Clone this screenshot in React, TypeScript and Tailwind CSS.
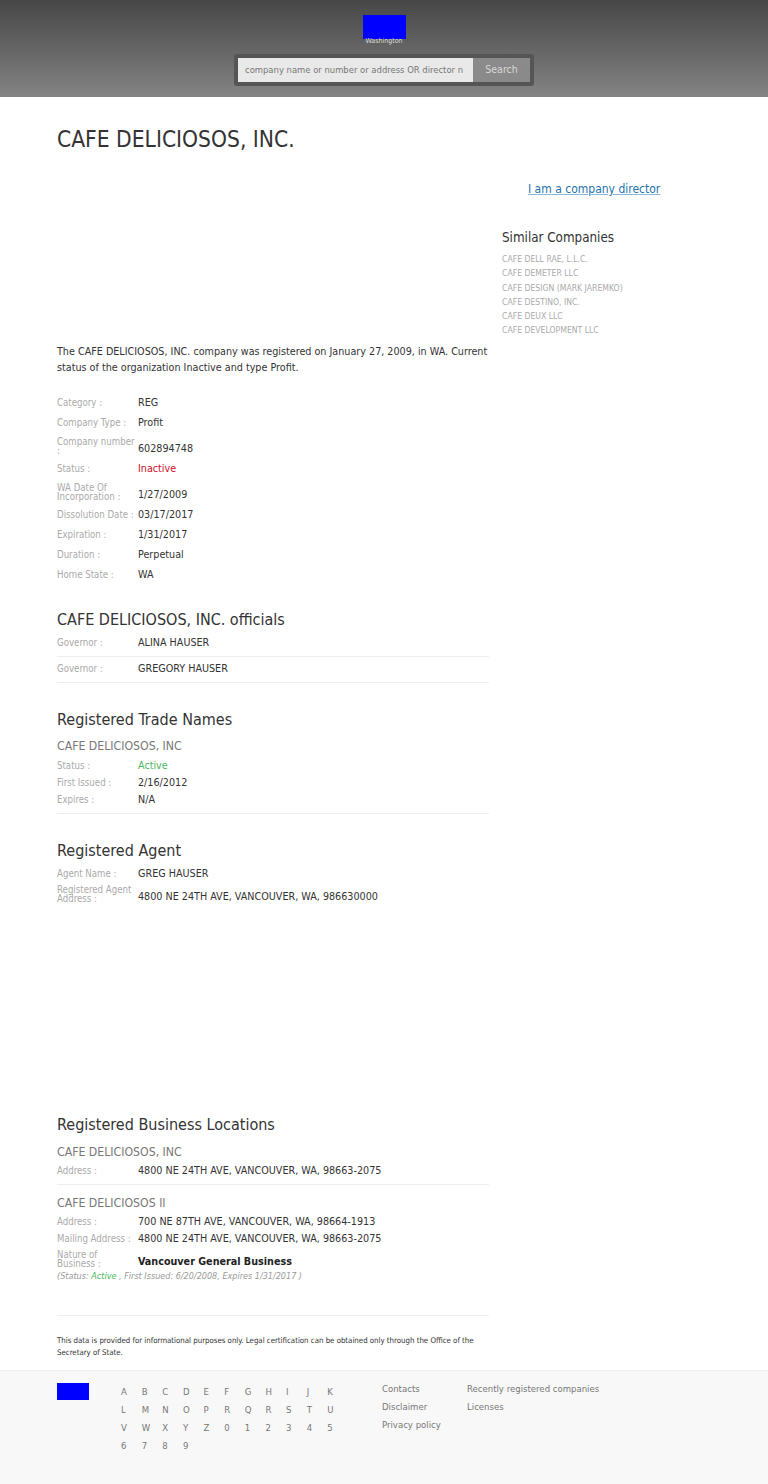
const similar = [
	'CAFE DELL RAE, L.L.C.',
	'CAFE DEMETER LLC',
	'CAFE DESIGN (MARK JAREMKO)',
	'CAFE DESTINO, INC.',
	'CAFE DEUX LLC',
	'CAFE DEVELOPMENT LLC'
]

const details: { label: string; value: string; color?: string }[] = [
	{ label: 'Category :', value: 'REG' },
	{ label: 'Company Type :', value: 'Profit' },
	{ label: 'Company number\n:', value: '602894748' },
	{ label: 'Status :', value: 'Inactive', color: 'text-[#d0102a]' },
	{ label: 'WA Date Of\nIncorporation :', value: '1/27/2009' },
	{ label: 'Dissolution Date :', value: '03/17/2017' },
	{ label: 'Expiration :', value: '1/31/2017' },
	{ label: 'Duration :', value: 'Perpetual' },
	{ label: 'Home State :', value: 'WA' }
]

// the site lists R twice, keep it as shown
const letters = 'ABCDEFGHIJKLMNOPRQRSTUVWXYZ0123456789'.split('')

function Label({ children, leading }: { children: string; leading?: string }) {
	const lh = leading ?? (children.includes('\n') ? 'leading-[9px]' : 'leading-[12px]')
	return (
		<div className={`w-[81px] shrink-0 whitespace-pre text-[9.6px] ${lh} text-[#aaa]`}>
			{children}
		</div>
	)
}

function Row({
	label,
	children,
	className = ''
}: {
	label: string
	children: React.ReactNode
	className?: string
}) {
	return (
		<div className="flex h-[17px] items-center">
			<Label>{label}</Label>
			<div className={`text-[10.7px] leading-[12px] ${className || 'text-[#333]'}`}>
				{children}
			</div>
		</div>
	)
}

function Heading({ children, className = '' }: { children: React.ReactNode; className?: string }) {
	return (
		<h2 className={`text-[16px] leading-[20px] text-[#333] ${className}`}>
			{children}
		</h2>
	)
}

function SubHeading({ children, className = '' }: { children: React.ReactNode; className?: string }) {
	return (
		<h3 className={`text-[12.2px] leading-[16px] text-[#777] ${className}`}>
			{children}
		</h3>
	)
}

export default function App() {
	return (
		<div className="min-h-[1484px] bg-white font-['DejaVu_Sans_Condensed','DejaVu_Sans',sans-serif] text-[#333]">
			<header className="flex h-[97px] flex-col items-center bg-gradient-to-b from-[#474747] to-[#848484] pt-[15px]">
				<div className="relative h-[24px] w-[43px] bg-[#0000ff]">
					<span className="absolute left-1/2 top-[22px] -translate-x-1/2 text-[7px] leading-[8px] text-[#ddd]">
						Washington
					</span>
				</div>
				<div className="mt-[15px] flex h-[32px] w-[300px] rounded-[3px] bg-[#555] p-[4px]">
					<div className="flex flex-1 items-center overflow-hidden whitespace-nowrap bg-[#e9e9e9] pl-[7px] text-[9.4px] text-[#777]">
						company name or number or address OR director n
					</div>
					<div className="flex w-[57px] items-center justify-center bg-[#8a8a8a] text-[10.5px] text-[#d8d8d8]">
						Search
					</div>
				</div>
			</header>

			<main className="mx-auto w-[654px]">
				<h1 className="pt-[29px] text-[22.6px] leading-[26px] text-[#333]">
					CAFE DELICIOSOS, INC.
				</h1>

				<div className="flex gap-[13px]">
					<div className="w-[432px] shrink-0">
						<div className="h-[192px]" />
						<p className="text-[10.7px] leading-[16px] text-[#333]">
							The CAFE DELICIOSOS, INC. company was registered on January 27, 2009, in WA. Current status of the organization Inactive and type Profit.
						</p>

						<div className="mt-[17px]">
							{details.map(d => (
								<div key={d.label} className="flex items-end py-[4px]">
									<Label>{d.label}</Label>
									<div className={`text-[10.7px] leading-[12px] ${d.color ?? 'text-[#333]'}`}>
										{d.value}
									</div>
								</div>
							))}
						</div>

						<Heading className="mt-[25px]">CAFE DELICIOSOS, INC. officials</Heading>
						{['ALINA HAUSER', 'GREGORY HAUSER'].map((name, i) => (
							<div
								key={name}
								className={`flex items-center border-b border-[#eee] ${i === 0 ? 'pt-[7px] pb-[7px]' : 'pt-[6px] pb-[7px]'}`}
							>
								<Label>Governor :</Label>
								<div className="text-[10.7px] leading-[12px]">{name}</div>
							</div>
						))}

						<Heading className="mt-[27px]">Registered Trade Names</Heading>
						<SubHeading className="mt-[8px]">CAFE DELICIOSOS, INC</SubHeading>
						<div className="mt-[3px] border-b border-[#eee] pb-[5px]">
							<Row label="Status :" className="text-[#4cb85c]">Active</Row>
							<Row label="First Issued :">2/16/2012</Row>
							<Row label="Expires :">N/A</Row>
						</div>

						<Heading className="mt-[27px]">Registered Agent</Heading>
						<div className="mt-[5px]">
							<div className="flex items-end py-[2px]">
								<Label>Agent Name :</Label>
								<div className="text-[10.7px] leading-[12px]">GREG HAUSER</div>
							</div>
							<div className="flex items-end pt-[3px] pb-[2px]">
								<Label>{'Registered Agent\nAddress :'}</Label>
								<div className="text-[10.7px] leading-[12px]">4800 NE 24TH AVE, VANCOUVER, WA, 986630000</div>
							</div>
						</div>

						<div className="h-[210px]" />

						<Heading>Registered Business Locations</Heading>
						<SubHeading className="mt-[9px]">CAFE DELICIOSOS, INC</SubHeading>
						<div className="mt-[2px] border-b border-[#eee] pb-[5px]">
							<Row label="Address :">4800 NE 24TH AVE, VANCOUVER, WA, 98663-2075</Row>
						</div>
						<SubHeading className="mt-[10px]">CAFE DELICIOSOS II</SubHeading>
						<div className="mt-[2px]">
							<Row label="Address :">700 NE 87TH AVE, VANCOUVER, WA, 98664-1913</Row>
							<Row label="Mailing Address :">4800 NE 24TH AVE, VANCOUVER, WA, 98663-2075</Row>
							<div className="flex items-end pt-[4px]">
								<Label leading="leading-[8.5px]">{'Nature of\nBusiness :'}</Label>
								<div className="text-[10.7px] font-bold leading-[12px] text-[#222]">
									Vancouver General Business
								</div>
							</div>
							<p className="mt-[2px] text-[9px] italic leading-[12px] text-[#999]">
								(Status: <span className="text-[#4cb85c]">Active</span> , First Issued: 6/20/2008, Expires 1/31/2017 )
							</p>
						</div>

						<div className="mt-[33px] border-b border-[#eee]" />
						<p className="mt-[19px] text-[7.8px] leading-[12px] text-[#333]">
							This data is provided for informational purposes only. Legal certification can be obtained only through the Office of the Secretary of State.
						</p>
					</div>

					<aside className="w-[209px] shrink-0">
						<a
							href="#"
							className="mt-[28px] ml-[26px] inline-block text-[12px] leading-[18px] text-[#1f72aa] underline decoration-[#8ab8d8]"
						>
							I am a company director
						</a>
						<h3 className="mt-[28px] text-[13.3px] leading-[20px] text-[#333]">
							Similar Companies
						</h3>
						<ul className="mt-[4px]">
							{similar.map(s => (
								<li key={s} className="text-[8.6px] leading-[14.3px] text-[#aaa]">
									{s}
								</li>
							))}
						</ul>
					</aside>
				</div>
			</main>

			<footer className="mt-[11px] h-[114px] border-t border-[#eee] bg-[#f8f8f8]">
				<div className="mx-auto flex w-[654px] pt-[12px] text-[9.5px] text-[#777]">
					<div className="h-[17px] w-[32px] bg-[#0000ff]" />
					<div className="ml-[32px] grid w-[227px] grid-cols-11">
						{letters.map((l, i) => (
							<a key={i} href="#" className="leading-[18px]">
								{l}
							</a>
						))}
					</div>
					<div className="ml-[34px] -mt-[3px] flex w-[85px] flex-col">
						<a href="#" className="leading-[18px]">Contacts</a>
						<a href="#" className="leading-[18px]">Disclaimer</a>
						<a href="#" className="leading-[18px]">Privacy policy</a>
					</div>
					<div className="-mt-[3px] flex flex-col">
						<a href="#" className="leading-[18px]">Recently registered companies</a>
						<a href="#" className="leading-[18px]">Licenses</a>
					</div>
				</div>
			</footer>
		</div>
	)
}
